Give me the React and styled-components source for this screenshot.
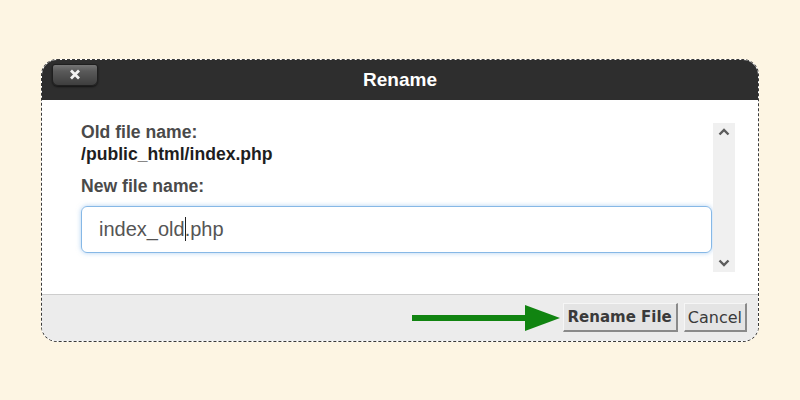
import React from "react";
import styled, { createGlobalStyle } from "styled-components";

const GlobalStyle = createGlobalStyle`
  html, body {
    margin: 0;
    padding: 0;
    background: #fdf5e3;
  }
`;

const Page = styled.div`
  width: 800px;
  height: 400px;
  display: flex;
  align-items: center;
  justify-content: center;
  font-family: "Liberation Sans", Arial, sans-serif;
`;

const Dialog = styled.div`
  width: 718px;
  height: 283px;
  box-sizing: border-box;
  border: 1px dashed #3a3a3a;
  border-radius: 16px;
  overflow: hidden;
  display: flex;
  flex-direction: column;
  background: #fff;
`;

const Header = styled.div`
  height: 40px;
  flex: none;
  background: #2e2e2e;
  position: relative;
  display: flex;
  align-items: center;
  justify-content: center;
`;

const Title = styled.div`
  color: #fff;
  font-weight: bold;
  font-size: 19px;
  margin-top: 1px;
`;

const CloseButton = styled.div`
  position: absolute;
  left: 10px;
  top: 4px;
  width: 46px;
  height: 22px;
  box-sizing: border-box;
  border-radius: 3px 3px 6px 6px;
  background: linear-gradient(#767676 0%, #5a5a5a 30%, #3e3e3e 100%);
  border: 1px solid #1f1f1f;
  box-shadow: 0 1px 2px rgba(0, 0, 0, 0.6);
  display: flex;
  align-items: center;
  justify-content: center;
`;

const Body = styled.div`
  flex: 1;
  display: flex;
  padding: 21px 23px 22px 39px;
  gap: 1px;
`;

const Content = styled.div`
  flex: 1;
  display: flex;
  flex-direction: column;
`;

const Label = styled.div`
  font-size: 17.6px;
  font-weight: bold;
  line-height: 22px;
  color: ${(p) => (p.$dark ? "#1e1e1e" : "#4a4a4a")};
  margin-top: ${(p) => p.$gap || 0}px;
`;

const Input = styled.div`
  margin-top: 9px;
  height: 47px;
  box-sizing: border-box;
  border: 1px solid #86b8e6;
  border-radius: 6px;
  box-shadow: 0 0 5px rgba(110, 170, 230, 0.55);
  display: flex;
  align-items: center;
  padding-left: 17px;
  font-size: 20px;
  color: #555;
`;

const Caret = styled.span`
  display: inline-block;
  width: 1px;
  height: 24px;
  background: #222;
  vertical-align: middle;
  margin: 0 -1px 0 0;
`;

const Scrollbar = styled.div`
  width: 22px;
  flex: none;
  margin-top: 2px;
  background: #f0f0f0;
  display: flex;
  flex-direction: column;
  justify-content: space-between;
  align-items: center;
  padding: 5px 0;
  height: 149px;
  box-sizing: border-box;
`;

const Footer = styled.div`
  height: 48px;
  flex: none;
  box-sizing: border-box;
  background: #ececec;
  border-top: 1px solid #cdcdcd;
  display: flex;
  align-items: center;
  justify-content: flex-end;
  padding: 0 11px 1px 0;
`;

const Button = styled.button`
  height: 29px;
  box-sizing: border-box;
  font-family: "DejaVu Sans", Verdana, sans-serif;
  font-size: ${(p) => (p.$primary ? "15px" : "16px")};
  font-weight: ${(p) => (p.$primary ? "bold" : "normal")};
  color: #3a3a3a;
  background: #e4e4e4;
  border-style: solid;
  border-width: 1px 2px 2px 1px;
  border-color: #f6f6f6 #8a8a8a #8a8a8a #f6f6f6;
  padding: 0 ${(p) => (p.$primary ? "4px" : "3px")};
  margin-left: ${(p) => (p.$primary ? "2px" : "6px")};
`;

const Chevron = ({ up }) => (
  <svg width="12" height="8" viewBox="0 0 12 8">
    <path
      d={up ? "M1.5 6.5 L6 2 L10.5 6.5" : "M1.5 1.5 L6 6 L10.5 1.5"}
      fill="none"
      stroke="#5c5c5c"
      strokeWidth="2.4"
    />
  </svg>
);

const CloseIcon = () => (
  <svg width="12" height="11" viewBox="0 0 12 11">
    <path d="M2 1.5 L10 9.5 M10 1.5 L2 9.5" stroke="#f2f2f2" strokeWidth="2.8" />
  </svg>
);

const Arrow = () => (
  <svg width="150" height="28" viewBox="0 0 150 28">
    <rect x="1" y="11" width="118" height="6" fill="#118411" />
    <polygon points="114,1 149,14 114,27" fill="#118411" />
  </svg>
);

export default function App() {
  return (
    <Page>
      <GlobalStyle />
      <Dialog>
        <Header>
          <CloseButton>
            <CloseIcon />
          </CloseButton>
          <Title>Rename</Title>
        </Header>
        <Body>
          <Content>
            <Label>Old file name:</Label>
            <Label $dark>/public_html/index.php</Label>
            <Label $gap={10}>New file name:</Label>
            <Input>
              index_old<Caret />.php
            </Input>
          </Content>
          <Scrollbar>
            <Chevron up />
            <Chevron />
          </Scrollbar>
        </Body>
        <Footer>
          <Arrow />
          <Button $primary>Rename File</Button>
          <Button>Cancel</Button>
        </Footer>
      </Dialog>
    </Page>
  );
}
